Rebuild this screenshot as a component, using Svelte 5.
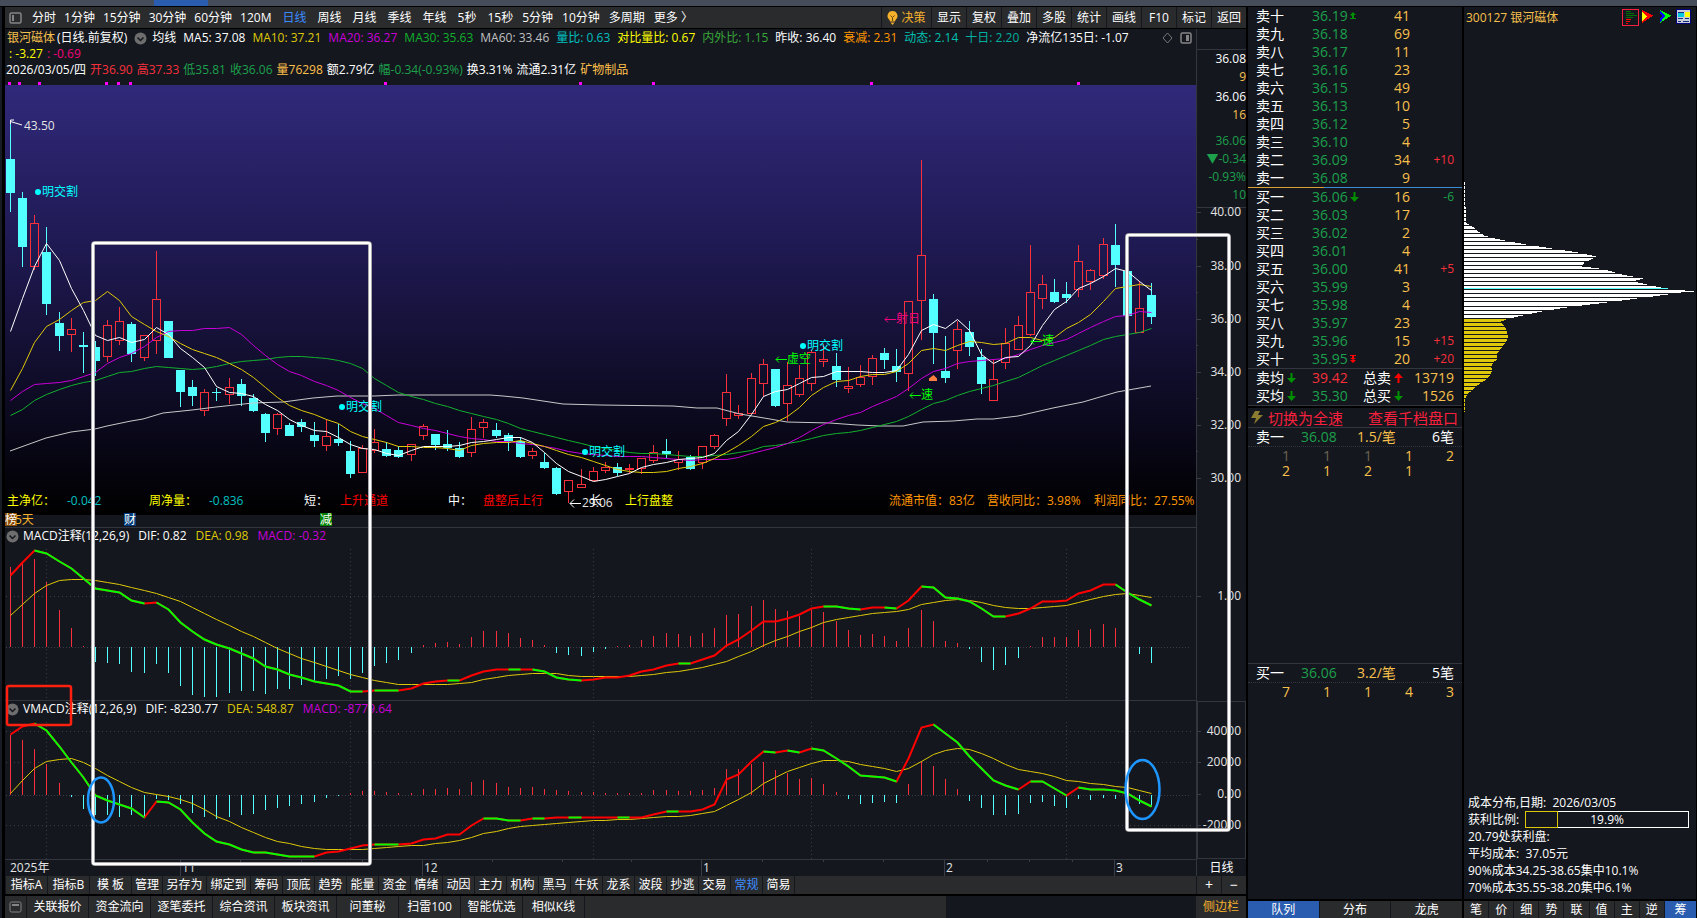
<script>
  const step = 12.14;
  const bx = (i) => 10 + Math.round(i * step);

  // Candles: direction, high, body top, body bottom, low
  const candles = `d 120 159 193 212|d 192 198 247 267|u 215 223 267 270|d 227 252 304 315|d 312 323 336 351|u 318 329 335 352|d 332 345 347 373|d 341 347 361 376|u 320 325 357 362|u 307 321 341 345|d 322 324 354 362|u 335 335 358 361|u 251 299 341 354|d 321 321 358 358|d 370 370 392 407|d 380 387 396 406|u 389 392 411 416|d 388 392 393 401|u 378 387 395 404|d 379 384 396 406|d 394 398 411 412|d 413 414 433 442|u 413 414 429 435|d 423 425 436 436|d 419 422 427 432|d 422 435 441 447|u 419 436 446 451|d 424 439 443 446|d 441 451 474 478|u 445 448 473 473|u 429 442 451 453|d 442 449 456 457|d 446 450 457 458|u 444 444 455 461|u 424 426 436 440|d 434 434 445 450|d 430 444 448 451|d 442 448 457 458|u 417 429 453 457|u 419 422 428 438|d 423 430 436 438|d 433 435 441 451|d 437 441 457 458|u 448 451 456 459|d 453 462 468 469|d 467 468 494 495|u 480 480 492 503|u 469 484 488 488|u 467 471 481 481|u 462 467 471 473|d 463 467 473 476|u 464 468 470 473|u 458 458 469 474|u 445 452 461 463|d 439 451 454 458|u 451 459 463 470|d 455 457 469 470|u 446 446 463 469|u 434 435 447 449|u 374 392 419 426|u 405 413 416 419|u 373 378 414 414|u 359 364 384 397|d 369 369 406 407|u 362 385 404 421|u 365 378 395 397|u 350 352 384 391|u 344 359 362 367|d 353 366 380 387|u 367 386 389 393|u 365 377 385 387|u 355 358 377 385|d 348 353 360 369|d 349 366 372 382|u 301 301 374 391|u 160 255 301 340|d 294 299 333 364|d 336 371 378 383|u 321 329 351 369|d 321 332 347 356|d 349 357 384 394|u 359 379 401 401|u 328 343 363 369|u 316 325 350 350|u 245 292 335 336|u 275 284 299 309|d 279 292 302 303|d 282 294 298 303|u 245 261 290 297|u 269 270 282 290|u 238 244 276 279|d 224 245 265 287|d 271 271 316 316|u 281 308 333 333|d 283 295 317 324`
    .split('|')
    .map((s) => s.split(' '))
    .map(([dir, ...v], i) => {
      const [high, top, bottom, low] = v.map(Number);
      return { dir, x: bx(i), high, top, bottom, low };
    });

  const nums = (s) => s.trim().split(/\s+/).map(Number);
  const trace = (arr, from = 0, to = arr.length - 1) => {
    let s = '';
    for (let i = from; i <= to; i++) s += `${bx(i) + 0.5},${arr[i] + 0.5} `;
    return s;
  };

  const ma5 = nums(`331 298 266 243 260 288 310 335 340 337 342 339 327 334 348 357 367 386 392 393 396 404 410 419 425 430 431 437 444 448 449 453 455 450 446 446 446 445 442 441 439 437 437 442 452 463 471 476 481 479 476 473 467 464 462 459 458 457 453 440 431 414 396 391 389 383 377 376 371 371 371 372 372 370 354 330 324 328 319 330 354 363 357 356 345 325 309 301 288 283 276 268 271 281 290`);
  const ma10 = nums(`390 368 342 326 319 310 302 300 291 300 316 324 331 336 343 349 353 357 363 369 377 387 397 405 410 414 419 423 431 436 439 442 446 446 447 447 448 450 445 443 442 442 440 443 446 450 454 457 461 465 469 471 472 472 471 468 466 463 458 452 445 436 426 422 416 407 395 387 381 380 376 374 374 371 363 350 348 350 345 341 342 344 343 337 337 340 337 328 322 314 301 288 286 284 286`);
  const ma20 = nums(`400 391 384 383 382 380 376 372 363 357 353 346 337 331 330 330 328 328 327 334 345 355 364 371 375 381 385 390 397 403 408 415 422 425 428 430 433 436 438 439 441 441 443 444 446 448 451 453 454 455 456 456 456 457 458 459 460 459 459 459 457 453 450 447 443 437 430 424 419 415 412 406 401 396 388 378 371 368 363 361 360 359 358 354 349 345 342 339 333 327 321 316 315 311 312`);
  const ma30 = nums(`415 409 400 394 389 385 382 380 376 372 371 368 366 367 368 369 368 366 363 361 360 359 357 356 356 357 358 360 363 368 378 385 392 396 399 403 406 410 413 416 419 423 428 431 434 437 440 443 446 448 450 452 453 453 454 455 456 456 455 454 452 450 446 445 443 441 438 435 433 432 430 427 424 421 416 409 403 400 395 391 388 385 381 377 371 365 360 355 350 345 339 336 334 332 328`);
  const ma60 = '10,451 46,438 71,432 95,429 107,426 131,421 143,419 163,413 192,410 216,407 253,403 283,402 313,398 337,396 374,396 398,395 463,395 490,395 503,396 523,398 563,404 600,405 673,406 697,408 717,408 740,414 770,419 787,422 830,423 857,425 880,426 903,426 923,422 953,421 977,419 993,419 1018,416 1053,408 1083,402 1117,392 1151,386';

  const macdBars = nums(`567 563 559 582 610 628 646 662 663 664 672 673 664 673 686 695 697 697 693 691 691 694 689 689 685 682 679 676 679 673 666 663 660 653 645 643 642 644 637 631 631 633 638 640 645 653 655 656 652 649 646 645 640 636 633 634 636 633 628 615 614 606 600 609 611 616 610 612 621 630 635 634 636 641 628 610 621 641 643 649 662 670 665 658 646 637 637 637 630 629 624 628 647 654 663`);
  const dif = nums(`575 562 550 553 561 568 578 588 590 592 600 603 602 609 622 631 639 644 648 653 658 666 669 674 677 681 683 685 691 691 690 690 690 688 683 681 680 680 675 671 669 669 669 669 671 677 679 680 679 677 677 675 671 669 665 663 663 659 655 645 639 630 621 621 618 614 608 606 606 608 609 607 607 608 600 586 587 597 598 601 608 616 616 613 608 601 601 600 593 590 584 584 592 599 605`);
  const dea = nums(`615 604 593 585 580 579 579 580 582 584 587 590 593 597 601 607 613 619 625 631 636 642 648 653 658 662 666 670 674 677 680 682 684 684 684 684 684 683 682 679 677 675 674 673 673 673 675 676 676 676 676 676 675 674 672 671 669 667 664 661 656 651 645 640 636 631 627 622 619 617 615 613 612 611 609 604 602 600 599 600 602 605 607 608 608 607 606 605 602 599 596 594 593 595 597`);
  const macdFalls = [[2, 11], [12, 29], [30, 32], [36, 37], [41, 42], [43, 47], [55, 56], [67, 70], [72, 73], [75, 82], [91, 94]];

  const vBars = nums(`735 740 749 764 783 797 809 815 815 817 815 817 799 800 804 813 817 819 817 815 814 810 808 806 804 802 798 796 793 791 791 792 793 793 789 789 788 789 782 780 783 787 788 787 789 790 791 792 792 793 793 793 793 790 790 791 791 790 788 769 769 764 762 770 773 779 778 784 792 799 804 803 802 803 784 761 766 779 789 801 808 815 815 814 803 802 806 808 799 800 798 799 795 804 807`);
  const vdif = nums(`734 726 723 730 746 762 777 795 800 804 808 817 801 802 809 822 833 841 844 849 852 852 854 856 856 856 852 851 848 845 844 844 844 843 839 838 834 834 825 818 818 820 820 818 818 817 817 817 817 817 817 817 817 814 811 811 811 809 804 779 774 761 751 752 750 752 748 750 758 766 775 776 777 781 758 727 724 733 742 756 768 780 785 789 781 781 788 795 787 789 789 790 793 800 806`);
  const vdea = nums(`793 780 768 761 759 758 762 768 775 781 787 792 794 796 799 803 809 816 821 827 832 837 841 843 846 848 849 849 849 849 848 847 846 845 845 843 842 840 837 833 831 828 826 825 824 823 822 821 820 820 819 819 818 817 816 816 815 813 811 805 799 792 783 777 771 767 763 760 760 761 764 766 768 771 768 761 754 750 748 749 753 758 764 769 771 773 776 780 781 783 784 786 787 790 793`);
  const vFalls = [[2, 11], [12, 25], [30, 32], [39, 42], [43, 44], [46, 47], [50, 51], [54, 55], [62, 63], [64, 65], [66, 73], [76, 83], [84, 87], [88, 94]];

  // Cost distribution outline: y and length of the bar there
  const outline = [[182, 1], [206, 1], [207, 2], [222, 2], [223, 3], [225, 6], [227, 10], [231, 14], [235, 20], [238, 31], [241, 46], [244, 62], [248, 88], [252, 114], [256, 132], [258, 129], [262, 120], [266, 118], [268, 135], [270, 144], [274, 158], [278, 179], [280, 172], [282, 174], [284, 183], [287, 197], [288, 204], [290, 221], [291, 230], [292, 217], [294, 204], [298, 173], [302, 143], [306, 109], [310, 83], [313, 68], [316, 54], [318, 46], [319, 42], [321, 37], [323, 38], [325, 40], [330, 43], [337, 44], [343, 41], [348, 37], [353, 33], [359, 33], [362, 29], [366, 27], [370, 28], [376, 25], [380, 21], [383, 16], [386, 12], [390, 8], [393, 4], [396, 2], [400, 1], [412, 1]];
  const chips = [];
  for (let y = 182; y < 412; y++) {
    if (y < 303 ? y % 4 === 1 : y % 4 === 2) continue;
    const k = outline.findIndex((p) => p[0] > y) - 1;
    const [y0, w0] = outline[k];
    const [y1, w1] = outline[k + 1];
    const w = Math.round(w0 + ((w1 - w0) * (y - y0)) / (y1 - y0));
    chips.push({ y, w, fill: y === 288 ? '#54ffff' : y < 319 ? '#fff' : '#dec809' });
  }

  const periods = [
    ['分时', '1分钟', '15分钟', '30分钟', '60分钟', '120M'],
    ['日线', '周线', '月线', '季线', '年线', '5秒'],
    ['15秒', '5分钟', '10分钟', '多周期', '更多 〉']
  ];
  const tools = ['显示', '复权', '叠加', '多股', '统计', '画线', 'F10', '标记', '返回'];
  const averages = [
    ['均线', '#fff'], ['MA5: 37.08', '#fff'], ['MA10: 37.21', '#dec809'], ['MA20: 36.27', '#c800d8'], ['MA30: 35.63', '#12b02c'], ['MA60: 33.46', '#c0c0c0'], ['量比: 0.63', '#00c0c0'], ['对比量比: 0.67', '#ffff00'], ['内外比: 1.15', '#38a838'], ['昨收: 36.40', '#fff'], ['衰减: 2.31', '#ff9600'], ['动态: 2.14', '#00c0b0'], ['十日: 2.20', '#00b0a0'], ['净流亿135日: -1.07', '#fff']
  ];
  const daily = [
    ['2026/03/05/四', '#fff'], ['开36.90', '#f8303c'], ['高37.33', '#f8303c'], ['低35.81', '#1ca04c'], ['收36.06', '#1ca04c'], ['量76298', '#ffc04c'], ['额2.79亿', '#fff'], ['幅-0.34(-0.93%)', '#1ca04c'], ['换3.31%', '#fff'], ['流通2.31亿', '#fff'], ['矿物制品', '#ffc04c']
  ];
  const marks = [8, 18, 38, 105, 117, 129, 384, 579, 652, 870, 1077];
  const crossings = [46, 350, 593, 811, 1066];
  const ticks = [240, 301, 362, 492, 562, 631, 762, 823, 883, 987, 1029, 1072];
  const months = [[10, '2025年'], [180, '11'], [422, '12'], [701, '1'], [944, '2'], [1114, '3']];
  const indicators = ['筹码', '顶底', '趋势', '能量', '资金', '情绪', '动因', '主力', '机构', '黑马', '牛妖', '龙系', '波段', '抄逃', '交易', '常规', '简易'];
  const wideTabs = [['指标A', 42], ['指标B', 42], ['模 板', 42], ['管理', 31], ['另存为', 44], ['绑定到', 44]];
  const services = ['关联报价', '资金流向', '逐笔委托', '综合资讯', '板块资讯', '问董秘', '扫雷100', '智能优选', '相似K线'];
  const delivery = [[38, 192], [342, 407], [585, 452], [803, 346]];
  const arrows = [[776, 359, '虚空', '#00ff00'], [885, 319, '射日', '#f0047c'], [910, 395, '速', '#00ff00'], [1031, 341, '速', '#00ff00']];
  const footnotes = [
    [7, '主净亿：', '#ffff00'], [67, '-0.042', '#00c0c0'], [149, '周净量：', '#ffff00'], [209, '-0.836', '#00c0c0'], [304, '短：', '#fff'], [340, '上升通道', '#ff0000'], [448, '中：', '#fff'], [483, '盘整后上行', '#ff0000'], [590, '长', '#fff'], [625, '上行盘整', '#ffff00'], [889, '流通市值：83亿', '#ff9600'], [987, '营收同比：3.98%', '#ff9600'], [1094, '利润同比：27.55%', '#ff9600']
  ];

  const asks = [['卖十', '36.19', '41', '', 'up'], ['卖九', '36.18', '69'], ['卖八', '36.17', '11'], ['卖七', '36.16', '23'], ['卖六', '36.15', '49'], ['卖五', '36.13', '10'], ['卖四', '36.12', '5'], ['卖三', '36.10', '4'], ['卖二', '36.09', '34', '+10'], ['卖一', '36.08', '9']];
  const bids = [['买一', '36.06', '16', '-6', 'down'], ['买二', '36.03', '17'], ['买三', '36.02', '2'], ['买四', '36.01', '4'], ['买五', '36.00', '41', '+5'], ['买六', '35.99', '3'], ['买七', '35.98', '4'], ['买八', '35.97', '23'], ['买九', '35.96', '15', '+15'], ['买十', '35.95', '20', '+20', 'floor']];
  const pages = ['笔', '价', '细', '势', '联', '值', '主', '逆', '筹'];
</script>

{#snippet arrow(kind)}
  {#if kind === 'up'}
    <svg width="6" height="8" viewBox="0 0 6 8" fill="#009000"><path d="M3 0L6 3H4V4H6L6 4H4V6H6V7H0V6H2V4H0L2 3H0z" /></svg>
  {:else if kind === 'floor'}
    <svg width="6" height="8" viewBox="0 0 6 8" fill="#ff0000"><path d="M0 0H6V1H4V3H6L3 5L0 3H2V1H0zM0 5H6L3 8z" /></svg>
  {:else if kind === 'down'}
    <svg width="9" height="10" viewBox="0 0 9 10" fill="#009000"><path d="M3.500 0H5.500V5H9L4.500 10L0 5H3.500z" /></svg>
  {:else if kind === 'rise'}
    <svg width="9" height="10" viewBox="0 0 9 10" fill="#ff0000"><path d="M3.500 10H5.500V5H9L4.500 0L0 5H3.500z" /></svg>
  {/if}
{/snippet}

{#snippet fold()}
  <svg class="fold" width="13" height="13" viewBox="0 0 13 13"><circle cx="6.500" cy="6.500" r="6" fill="#6e6e6e" /><path d="M3.500 5.500L6.500 8.500L9.500 5.500" fill="none" stroke="#14171e" stroke-width="1.500" /></svg>
{/snippet}

{#snippet book(rows)}
  <table class="book">
    <tbody>
      {#each rows as [name, price, volume, change, mark]}
        <tr>
          <th scope="row">{name}</th>
          <td class="price">{price}</td>
          <td class="mark">{@render arrow(mark)}</td>
          <td class="volume">{volume}</td>
          <td class="change" class:fall={change?.startsWith('-')}>{change ?? ''}</td>
        </tr>
      {/each}
    </tbody>
  </table>
{/snippet}

{#snippet oscillator(top, bottom, zero, levels, bars, fast, slow, falls)}
  <svg width="100%" height={bottom - top}>
    <g transform="translate(-5 {-top})">
      <g class="dots">
        {#each levels as y}<line x1="6" x2="100%" y1={y + 0.5} y2={y + 0.5} />{/each}
        {#each crossings as x}<line x1={x + 0.5} x2={x + 0.5} y1={top + 5} y2={bottom} />{/each}
        <line class="zero" x1="6" x2="100%" y1={zero + 0.5} y2={zero + 0.5} />
      </g>
      {#each bars as y, i}
        <rect x={bx(i)} y={Math.min(y, zero)} width="1" height={Math.abs(y - zero)} fill={y < zero ? '#f8303c' : '#54ffff'} />
      {/each}
      <polyline class="thin" points={trace(slow)} stroke="#dec809" />
      <polyline class="bold" points={trace(fast)} stroke="#ff0000" />
      {#each falls as [a, b]}<polyline class="bold" points={trace(fast, a, b)} stroke="#00ff00" />{/each}
    </g>
  </svg>
{/snippet}

<div class="app">
  <div class="strip"><i></i></div>
  <div class="columns">
    <div class="edge"></div>
    <main class="terminal">
      <nav class="toolbar">
        <svg class="pane" width="13" height="12" viewBox="0 0 13 12"><rect x="1" y="1" width="11" height="10" rx="1.500" fill="none" stroke="#858585" stroke-width="1.500" /><rect x="3" y="3" width="2" height="6" fill="#858585" /></svg>
        {#each periods as group, g}
          <div class="periods" class:middle={g === 1} class:late={g === 2}>
            {#each group as p}<button class:active={p === '日线'}>{p}</button>{/each}
          </div>
        {/each}
        <div class="tools">
          <button class="decide">
            <svg width="11" height="14" viewBox="0 0 11 14"><path d="M5.500 0A5 5 0 0 1 8.500 9L8 10.500H3L2.500 9A5 5 0 0 1 5.500 0z" fill="#f5b02c" /><path d="M3.500 4.500L5.500 6.500L7.500 4.500M5.500 6.500V10" stroke="#6b4a10" fill="none" /><path d="M3.500 11.500H7.500L5.500 14z" fill="#f5b02c" /></svg>决策
          </button>
          {#each tools as t}<button>{t}</button>{/each}
        </div>
      </nav>

      <section class="chart">
        <div class="info">
          <div class="line averages">
            <span class="gold">银河磁体</span><span class="sub">(日线.前复权)</span>
            {@render fold()}
            {#each averages as [text, color]}<span style="color:{color}">{text}</span>{/each}
            <svg class="corner" width="30" height="12" viewBox="0 0 30 12"><path d="M5.500 1L10 6L5.500 11L1 6z" fill="none" stroke="#777" /><rect x="19" y="1" width="10" height="10" rx="1.500" fill="none" stroke="#858585" stroke-width="1.500" /><rect x="24" y="3" width="3" height="6" fill="#858585" /></svg>
          </div>
          <div class="line second"><span style="color:#ffff00">: -3.27</span><span style="color:#f0047c">: -0.69</span></div>
          <div class="line">{#each daily as [text, color]}<span style="color:{color}">{text}</span>{/each}</div>
          <svg class="marks" width="100%" height="3">
            {#each marks as x}<rect x={x - 5} y="0" width="3" height="3" fill="#ff00ff" />{/each}
          </svg>
        </div>

        <div class="ladder">
          <div class="quote">
            <span>36.08</span><span class="gold">9</span>
            <span class="gap">36.06</span><span class="gold">16</span>
            <span class="gap wide green">36.06</span><span class="green">▼-0.34</span><span class="green">-0.93%</span><span class="green">10</span>
          </div>
          <svg width="50" height="320">
            <g transform="translate(-1196 -208)">
              {#each [212, 266, 319, 372, 425, 478] as y, i}
                <rect x="1196" {y} width="5" height="1" fill="#3a3d47" />
                {#if i}<rect x="1196" y={y - 27} width="2" height="1" fill="#3a3d47" />{/if}
                <text x="1241" y={y + 4} text-anchor="end">{40 - i * 2}.00</text>
              {/each}
            </g>
          </svg>
        </div>

        <div class="prices">
          <svg width="100%" height="430">
            <g transform="translate(-5 -85)">
              {#each candles as c}
                {#if c.dir === 'd'}
                  <rect x={c.x} y={c.high} width="1" height={c.low - c.high} fill="#54ffff" />
                  <rect x={c.x - 4} y={c.top} width="9" height={c.bottom - c.top} fill="#54ffff" />
                {:else}
                  <rect x={c.x} y={c.high} width="1" height={c.top - c.high} fill="#f8303c" />
                  <rect x={c.x} y={c.bottom} width="1" height={c.low - c.bottom} fill="#f8303c" />
                  <rect x={c.x - 3.5} y={c.top + 0.5} width="8" height={Math.max(1, c.bottom - c.top - 1)} fill="none" stroke="#f8303c" />
                {/if}
              {/each}
              <polyline class="thin" points={ma60} stroke="#c8c8c8" />
              <polyline class="thin" points={trace(ma30)} stroke="#12b02c" />
              <polyline class="thin" points={trace(ma20)} stroke="#c800d8" />
              <polyline class="thin" points={trace(ma10)} stroke="#dec809" />
              <polyline class="thin" points={trace(ma5)} stroke="#fff" />
              <path d="M22 125L10.500 121.500M14 120H10.500V124" fill="none" stroke="#fff" />
              <text x="24" y="130">43.50</text>
              {#each delivery as [x, y]}
                <circle cx={x} cy={y} r="3" fill="#00ffff" />
                <text x={x + 4} y={y + 4} fill="#00ffff">明交割</text>
              {/each}
              {#each arrows as [x, y, text, color]}
                <path d="M{x + 11} {y + 0.5}H{x}M{x + 3} {y - 2.5}L{x} {y + 0.5}L{x + 3} {y + 3.5}" fill="none" stroke={color} />
                <text x={x + 11} y={y + 4} fill={color}>{text}</text>
              {/each}
              <path d="M929 381V378.500L933.500 375L937 378.500V381z" fill="#ff8040" />
              <path d="M581 503.500H570M574 499.500L570 503.500L574 507.500" fill="none" stroke="#fff" />
              <text x="582" y="507">29.06</text>
              {#each footnotes as [x, text, color]}<text {x} y="505" fill={color}>{text}</text>{/each}
            </g>
          </svg>
        </div>

        <div class="events">
          <span class="badge rank">榜</span><span class="days">5天</span>
          <span class="badge report">财</span><span class="badge sell">减</span>
        </div>

        <div class="panel">
          <div class="title">{@render fold()}<span>MACD注释(12,26,9)</span><span>DIF: 0.82</span><span class="yellow">DEA: 0.98</span><span class="violet">MACD: -0.32</span></div>
          {@render oscillator(544, 700, 647, [596], macdBars, dif, dea, macdFalls)}
        </div>
        <svg class="axis" width="50" height="173">
          <g transform="translate(-1197 -528)">
            <rect x="1196" y="596" width="5" height="1" fill="#3a3d47" />
            <text x="1241" y="600" text-anchor="end">1.00</text>
          </g>
        </svg>

        <div class="panel">
          <div class="title">{@render fold()}<span>VMACD注释(12,26,9)</span><span>DIF: -8230.77</span><span class="yellow">DEA: 548.87</span><span class="violet">MACD: -8779.64</span></div>
          {@render oscillator(717, 859, 795, [731, 762, 825], vBars, vdif, vdea, vFalls)}
        </div>
        <svg class="axis" width="50" height="159">
          <g transform="translate(-1197 -701)">
            <rect x="1197.500" y="701.500" width="48" height="157" fill="none" stroke="#33363f" />
            {#each [[731, '40000'], [762, '20000'], [794, '0.00'], [825, '-20000']] as [y, text]}
              <rect x="1196" {y} width="5" height="1" fill="#3a3d47" />
              <text x="1241" y={y + 4} text-anchor="end">{text}</text>
            {/each}
          </g>
        </svg>

        <svg class="dates" width="100%" height="16">
          {#each ticks as x}<rect x={x - 5} y="0" width="1" height="2" fill="#3a3d47" />{/each}
          {#each months as [x, text], i}
            {#if i}<rect x={x - 5} y="0" width="1" height="16" fill="#3a3d47" />{/if}
            <text x={i ? x - 3 : 5} y="12">{text}</text>
          {/each}
        </svg>
        <div class="cycle">日线</div>

        <svg class="frames" width="100%" height="100%" aria-hidden="true">
          <g transform="translate(-5 -29)" fill="none">
            <rect x="93" y="243" width="277" height="621" rx="2" stroke="#8a8a90" stroke-width="4" />
            <rect x="93" y="243" width="277" height="621" rx="2" stroke="#fff" stroke-width="2.500" />
            <rect x="1127" y="235" width="102" height="595" rx="2" stroke="#8a8a90" stroke-width="4" />
            <rect x="1127" y="235" width="102" height="595" rx="2" stroke="#fff" stroke-width="2.500" />
            <rect x="7" y="686" width="64" height="39" rx="2" stroke="#ff2010" stroke-width="2.500" />
            <ellipse cx="101" cy="800" rx="13" ry="22.500" stroke="#1e96ff" stroke-width="2.500" />
            <ellipse cx="1142.500" cy="789.500" rx="17" ry="29.500" stroke="#1e96ff" stroke-width="2.500" />
          </g>
        </svg>
      </section>

      <nav class="tabs">
        {#each wideTabs as [text, w]}<button style="width:{w}px">{text}</button>{/each}
        {#each indicators as t}<button class:active={t === '常规'}>{t}</button>{/each}
        <span class="fill"></span>
        <button class="zoom" aria-label="放大">+</button><button class="zoom" aria-label="缩小">−</button>
      </nav>
      <nav class="tabs services">
        <button class="box" aria-label="窗口"><svg width="13" height="12" viewBox="0 0 13 12"><rect x="1" y="1" width="11" height="10" rx="1.500" fill="none" stroke="#858585" /><rect x="3" y="3" width="7" height="2" fill="#858585" /></svg></button>
        {#each services as t}<button>{t}</button>{/each}
        <span class="short"></span>
        <span class="void"></span>
        <button class="side">侧边栏</button>
      </nav>
    </main>

    <section class="orders">
      {@render book(asks)}
      <div class="split"></div>
      {@render book(bids)}
      <div class="totals">
        <span>卖均</span>{@render arrow('down')}<span class="red">39.42</span><span>总卖</span>{@render arrow('rise')}<span class="gold end">13719</span>
        <span>买均</span>{@render arrow('down')}<span class="green">35.30</span><span>总买</span>{@render arrow('down')}<span class="gold end">1526</span>
      </div>
      <div class="switch">
        <svg width="12" height="13" viewBox="0 0 12 13"><path d="M4 0H9L7 4H12L3 13L5 7H0z" fill="#8a7c30" /></svg>
        <button>切换为全速</button><button class="last">查看千档盘口</button>
      </div>
      <div class="queue first">
        <div class="head"><span>卖一</span><span class="green at">36.08</span><span class="gold">1.5/笔</span><span class="end">6笔</span></div>
        <div class="lots"><span class="dim">1</span><span class="dim">1</span><span class="dim">1</span><span>1</span><span>2</span><span>2</span><span>1</span><span>2</span><span>1</span></div>
      </div>
      <div class="queue">
        <div class="head"><span>买一</span><span class="green at">36.06</span><span class="gold">3.2/笔</span><span class="end">5笔</span></div>
        <div class="lots"><span>7</span><span>1</span><span>1</span><span>4</span><span>3</span></div>
      </div>
      <nav class="pages"><button class="on">队列</button><button>分布</button><button>龙虎</button></nav>
    </section>

    <section class="costs">
      <header>
        <span class="gold">300127 银河磁体</span>
        <svg width="70" height="18" viewBox="0 0 70 18" shape-rendering="crispEdges">
          <rect x="0.500" y="0.500" width="16" height="16" fill="none" stroke="#f8203c" />
          <path d="M4 2.500H9M4 4.500H12M4 6.500H15M4 8.500H11" stroke="#007000" />
          <path d="M4 10.500H9M4 12.500H8M4 14.500H6" stroke="#ff0000" />
          <path d="M20 1L31 6.500L20 14z" fill="#ff0000" /><path d="M20 3L25 7L20 13z" fill="#ffff00" />
          <path d="M38 1L49 6.500L38 14L42 7z" fill="#00ff00" /><path d="M38 1L43 7L38 14V10L40 7L38 4z" fill="#0000ff" />
          <rect x="54.500" y="0.500" width="14" height="14" fill="#c8ccd8" stroke="#00007c" />
          <rect x="56" y="3" width="6" height="5" fill="#00c8e0" /><rect x="63" y="3" width="5" height="5" fill="#ffff00" />
          <path d="M56 9.500H61M63 9.500H67M56 12.500H59M61 12.500H67M56 3.500H62" stroke="#10307c" />
        </svg>
      </header>
      <svg class="chips" width="100%" height="380">
        {#each chips as c}<rect x="0" y={c.y - 33} width={c.w} height="1" fill={c.fill} />{/each}
      </svg>
      <div class="summary">
        <p>成本分布,日期:&nbsp; 2026/03/05</p>
        <p class="ratio">获利比例:<span class="meter"><i style="width:20%"></i>19.9%</span></p>
        <p>20.79处获利盘:</p>
        <p>平均成本:&nbsp; 37.05元</p>
        <p>90%成本34.25-38.65集中10.1%</p>
        <p>70%成本35.55-38.20集中6.1%</p>
      </div>
      <nav class="pages small">{#each pages as p}<button class:on={p === '筹'}>{p}</button>{/each}</nav>
    </section>
  </div>
</div>

<style>
  :global(body) { background: #000; }
  .app {
    --panel: #14171e;
    --bar: #2a2b2d;
    --rule: #33363f;
    min-height: 100vh;
    display: flex;
    flex-direction: column;
    color: #fff;
    font: 12px/16px "Open Sans", "Noto Sans CJK SC", sans-serif;
    white-space: nowrap;
  }
  svg { display: block; flex: none; }
  svg text { font-size: 12px; }
  svg text:not([fill]) { fill: #e4e4e4; }
  button { border: 0; margin: 0; padding: 0; background: none; color: inherit; font: inherit; white-space: nowrap; }
  p { margin: 0; }
  .gold { color: #f8c04c; }
  .green { color: #1ca04c; }
  .red { color: #f8303c; }
  .yellow { color: #dec809; }
  .violet { color: #c800d8; }
  .end { margin-left: auto; }

  .strip { height: 6px; background: #464d5a; border-bottom: 1px solid #000; }
  .strip i { display: block; width: 54px; height: 6px; margin-left: 154px; background: #2a5db0; }
  .columns { flex: 1; display: flex; gap: 2px; }
  .edge { width: 2px; margin-right: -1px; background: #161b24; }
  .terminal { flex: 1; min-width: 0; display: flex; flex-direction: column; margin-left: 2px; }

  .toolbar { display: flex; align-items: center; height: 21px; background: var(--bar); border-bottom: 1px solid #000; }
  .pane { margin: 0 10px 0 4px; }
  .periods { display: flex; gap: 8px; margin-right: 11px; }
  .periods.middle { gap: 11px; }
  .periods.late { gap: 9px; }
  .active { color: #3c8cff; }
  .tools { margin-left: auto; display: flex; align-self: stretch; }
  .tools button { width: 35px; border-left: 1px solid #14171e; box-sizing: border-box; }
  .tools .decide { width: 50px; display: flex; align-items: center; justify-content: center; gap: 3px; color: #f5b02c; }

  .chart {
    position: relative;
    display: grid;
    grid-template-columns: minmax(0, 1fr) 50px;
    background: var(--panel);
  }
  .info { height: 56px; display: flex; flex-direction: column; }
  .line { display: flex; align-items: center; gap: 4px; height: 16px; padding-left: 1px; }
  .averages { gap: 7px; padding: 1px 4px 0 2px; }
  .sub { margin-left: -5px; }
  .averages .fold { margin: 0 -2px 0 0; }
  .corner { margin-left: auto; }
  .second { padding-left: 4px; }
  .marks { margin-top: auto; }
  .ladder { grid-column: 2; grid-row: 1 / span 3; border-left: 1px solid var(--rule); display: flex; flex-direction: column; }
  .ladder svg { margin-left: -1px; overflow: visible; }
  .quote { display: flex; flex-direction: column; align-items: flex-end; margin-top: 20px; border: solid var(--rule); border-width: 1px 0; line-height: 18px; height: 157px; }
  .gap { margin-top: 2px; }
  .gap.wide { margin-top: 8px; }
  .prices { height: 430px; background: linear-gradient(#30297a, #201a54 36%, #000); }
  .events { position: relative; height: 12px; border-bottom: 1px solid var(--rule); }
  .badge, .days { position: absolute; top: -2px; font-size: 12px; line-height: 13px; }
  .rank { left: 0; background: #8a4a00; width: 12px; }
  .days { left: 10px; color: #f5b02c; }
  .report { left: 119px; background: #003a78; }
  .sell { left: 315px; background: #008000; }

  .panel { display: flex; flex-direction: column; border-bottom: 1px solid var(--rule); overflow: hidden; }
  .title { display: flex; align-items: center; gap: 9px; height: 16px; padding-left: 1px; }
  .title .fold { margin-right: -5px; }
  .dots line { stroke: #3a3d47; stroke-dasharray: 1 3; }
  .dots .zero { stroke-dasharray: 1 2; }
  .thin { fill: none; stroke-width: 1; }
  .bold { fill: none; stroke-width: 2; }
  .axis { border-left: 1px solid var(--rule); box-sizing: border-box; }
  .cycle { text-align: center; border-left: 1px solid var(--rule); }
  .frames { position: absolute; inset: 0; pointer-events: none; }

  .tabs { display: flex; height: 18px; padding-left: 1px; background: #14171e; border-bottom: 2px solid #000; }
  .tabs button { width: 32px; background: var(--bar); border-right: 1px solid #14171e; box-sizing: border-box; }
  .fill { flex: 1; background: var(--bar); }
  .tabs .zoom { width: 25px; border-left: 1px solid #14171e; border-right: 0; font-size: 14px; }
  .services { flex: 1; min-height: 22px; border-bottom: 0; padding-left: 0; height: auto; }
  .services button { width: 62px; }
  .services .box { width: 22px; display: flex; align-items: center; justify-content: center; }
  .short { flex: 361; background: var(--bar); }
  .void { flex: 250; }
  .services .side { width: 50px; color: #f5b02c; border: 0; }

  .orders { width: 214px; flex: none; display: flex; flex-direction: column; background: var(--panel); font-size: 14px; line-height: 18px; }
  .book { border-collapse: collapse; table-layout: fixed; width: 100%; }
  .book th, .book td { padding: 0; height: 18px; }
  .book th { width: 64px; padding-left: 8px; box-sizing: border-box; text-align: left; font-weight: 400; }
  .price { width: 38px; color: #1ca04c; }
  .mark { width: 18px; }
  .volume { width: 42px; text-align: right; color: #f8c04c; }
  .book .change { text-align: right; padding-right: 8px; font-size: 12px; color: #f8303c; }
  .book .change.fall { color: #1ca04c; }
  .split { height: 1px; background: linear-gradient(90deg, #d8a030 0 76px, #3c8cd0 76px); }
  .totals { display: grid; grid-template-columns: 31px 25px 51px 31px 10px 1fr; align-items: center; padding: 0 8px; border: solid var(--rule); border-width: 1px 0; }
  .switch { display: flex; align-items: center; gap: 5px; height: 19px; padding: 0 4px 0 3px; border-top: 2px solid #000; border-bottom: 1px solid var(--rule); color: #f8203c; font-size: 15px; }
  .last { margin-left: auto; }
  .queue.first { height: 235px; }
  .queue + .queue { border-top: 1px solid var(--rule); }
  .head { display: flex; padding: 0 8px; height: 18px; border-bottom: 1px dotted var(--rule); }
  .at { margin-left: 17px; width: 56px; }
  .lots { display: grid; grid-template-columns: repeat(5, 41px); padding: 1px 0 0 1px; line-height: 15px; text-align: right; color: #f8c04c; }
  .dim { color: #6c6454; }

  .pages { display: flex; gap: 1px; margin-top: auto; height: 17px; border-top: 2px solid #000; font-size: 12px; line-height: 16px; }
  .pages button { flex: 1; background: var(--bar); }
  .pages .on { background: #2a5db0; }
  .pages.small { margin-top: 0; }
  .small button { flex: 24; }
  .small .on { flex: 31; }

  .costs { width: 232px; flex: none; display: flex; flex-direction: column; background: var(--panel); margin-right: 1px; }
  .costs header { display: flex; justify-content: space-between; align-items: center; height: 26px; box-sizing: border-box; padding: 0 4px 4px 2px; }
  .summary { margin-top: auto; padding: 0 7px 3px 4px; line-height: 17px; }
  .ratio { display: flex; gap: 6px; }
  .meter { position: relative; flex: 1; box-sizing: border-box; border: 1px solid #fff; line-height: 15px; text-align: center; }
  .meter i { position: absolute; left: -1px; top: -1px; bottom: -1px; box-sizing: border-box; border: 1px solid #dec809; }
</style>
